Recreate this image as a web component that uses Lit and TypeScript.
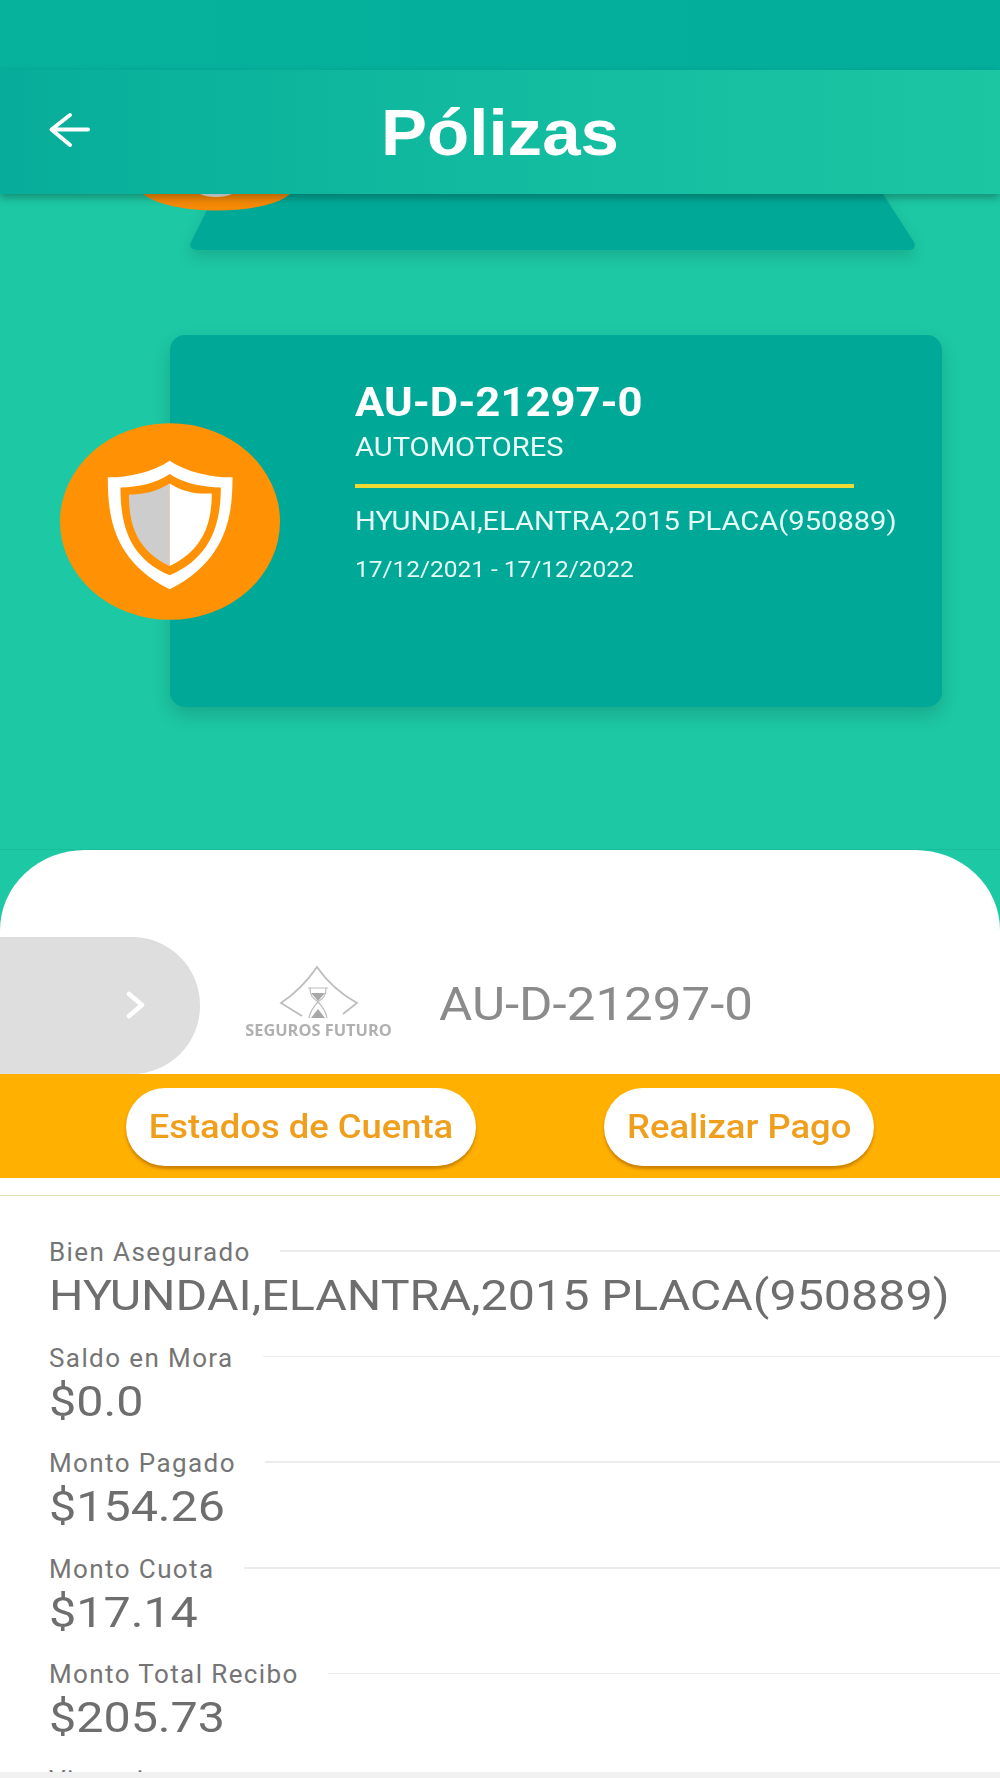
import { LitElement, html, css } from "lit";
import { customElement } from "lit/decorators.js";

const fields = [
  ["Bien Asegurado", "HYUNDAI,ELANTRA,2015 PLACA(950889)"],
  ["Saldo en Mora", "$0.0"],
  ["Monto Pagado", "$154.26"],
  ["Monto Cuota", "$17.14"],
  ["Monto Total Recibo", "$205.73"],
  ["Vigencia", ""],
];

@customElement("app-root")
export class AppRoot extends LitElement {
  static styles = css`
    :host { display: block; width: 1000px; height: 1778px; overflow: hidden; position: relative; background: #fff; font-family: Roboto, "Liberation Sans", sans-serif; }
    .status { height: 70px; background: linear-gradient(90deg, #06b29c, #03ae9a); }
    .header { position: relative; z-index: 3; height: 124px; display: flex; align-items: center; background: linear-gradient(90deg, #07ad9a 0%, #12bb9f 50%, #1cc6a3 100%); box-shadow: 0 4px 8px rgba(0,0,0,.28); }
    .back { position: absolute; left: 48px; top: 42px; width: 42px; height: 36px; }
    .header h1 { margin: 0; width: 100%; text-align: center; font: 700 64.5px/1 "Liberation Sans", Arial, sans-serif; color: #fff; transform: scaleX(1.07); margin-top: 3px; }
    .hero { position: relative; height: 746px; background: #1dc8a4; }
    .seam { position: absolute; left: 0; right: 0; top: 655px; height: 1px; background: #19bd9b; }
    .peek { position: absolute; left: 190px; top: 0; width: 725px; height: 56px; }
    .peek-shadow { filter: drop-shadow(0 7px 7px rgba(0,0,0,.13)); }
    .orange-peek { position: absolute; left: 130px; top: 0; width: 175px; height: 18px; }
    .card { position: absolute; left: 170px; top: 141px; width: 772px; height: 372px; box-sizing: border-box; border-radius: 15px; background: #00a997; box-shadow: 0 8px 18px rgba(0,0,0,.16); color: #fff; padding: 44px 0 0 185px; }
    .sx { display: block; transform-origin: left center; white-space: nowrap; }
    .policy { font-weight: 700; font-size: 40px; line-height: 48px; transform: scaleX(1.09); }
    .type { font-size: 26px; line-height: 30px; margin-top: 5px; color: #ecfbf8; transform: scaleX(1.12); }
    .rule { width: 499px; height: 4px; background: #f0d835; margin-top: 22px; }
    .asset { font-size: 26px; line-height: 32px; margin-top: 17px; color: #e6faf6; transform: scaleX(1.12); }
    .dates { font-size: 22px; line-height: 28px; margin-top: 19px; color: #e6faf6; transform: scaleX(1.11); }
    .seal { position: absolute; left: 60px; top: 229px; width: 220px; height: 197px; }
    .sheet { position: relative; z-index: 2; margin-top: -90px; background: #fff; border-radius: 85px 85px 0 0 / 80px 80px 0 0; box-sizing: border-box; padding-top: 87px; }
    .id-row { display: flex; align-items: center; height: 137px; }
    .pill { width: 200px; height: 137px; box-sizing: border-box; background: #dedede; border-radius: 0 68px 68px 0; display: flex; align-items: center; justify-content: flex-end; padding-right: 53px; padding-bottom: 2px; }
    .pill svg { width: 22px; height: 30px; }
    .logo { width: 148px; margin-left: 44px; display: flex; flex-direction: column; align-items: center; margin-top: -8px; }
    .logo svg { width: 84px; height: 56px; }
    .logo span { font: 700 15.3px/16px "Open Sans", sans-serif; color: #b0b0b0; white-space: nowrap; margin-top: 1px; transform: scaleX(1.07); }
    .id { margin-left: 47px; font-size: 46px; color: #8b8b8b; transform: scaleX(1.11); margin-top: -4px; }
    .band { height: 104px; background: #ffb000; position: relative; }
    .btn { position: absolute; top: 14px; height: 78px; box-sizing: border-box; border-radius: 39px; background: #fff; color: #ef9f1c; font-size: 32.5px; font-weight: 500; display: flex; align-items: center; justify-content: center; box-shadow: 0 3px 3px rgba(170,100,0,.6); white-space: nowrap; }
    .btn span { display: block; transform: scaleX(1.12); }
    .b1 { left: 126px; width: 350px; }
    .b2 { left: 604px; width: 270px; }
    .divider { height: 1px; background: #e9dfae; margin-top: 17px; }
    .fields { padding: 41px 0 0 49px; display: flex; flex-direction: column; }
    .field { height: 105.6px; }
    .label { display: flex; align-items: center; gap: 29px; height: 30px; font-size: 26px; color: #757575; letter-spacing: 1.4px; white-space: nowrap; }
    .label i { flex: 1; height: 1.5px; background: #ececec; margin-top: -2px; }
    .value { font-size: 43px; line-height: 50px; color: #6e6e6e; margin-top: 3px; transform: scaleX(1.126); }
    .nav { position: absolute; left: 0; right: 0; bottom: 0; height: 6px; background: #f1f1f1; z-index: 4; }
  `;

  render() {
    return html`
      <div class="status"></div>
      <div class="header">
        <svg class="back" viewBox="0 0 42 36" fill="none" stroke="#fff" stroke-width="4" stroke-linecap="round" stroke-linejoin="round"><path d="M22 3 L3.5 17.5 L22 33 M4 17.5 H40"/></svg>
        <h1>Pólizas</h1>
      </div>
      <div class="hero">
        <div class="seam"></div>
        <svg class="peek peek-shadow" viewBox="0 0 725 56"><path d="M25 0 H693 L724 48 Q727 56 718 56 H8 Q-2 56 1 48 Z" fill="#00a997"/></svg>
        <svg class="orange-peek" viewBox="0 0 175 18"><path d="M13 0 C40 22 135 22 160 0 Z" fill="#f58a06"/><path d="M70 0 C78 4 94 4 102 0 Z" fill="#e8e8e8"/></svg>
        <div class="card">
          <div class="sx policy">AU-D-21297-0</div>
          <div class="sx type">AUTOMOTORES</div>
          <div class="rule"></div>
          <div class="sx asset">HYUNDAI,ELANTRA,2015 PLACA(950889)</div>
          <div class="sx dates">17/12/2021 - 17/12/2022</div>
        </div>
        <svg class="seal" viewBox="62 70 658 588">
          <ellipse cx="391" cy="364" rx="329" ry="294" fill="#ff9104"/>
          <path d="M390 182C440 215 510 232 578 232C578 350 560 480 390 567C220 480 205 350 205 232C270 232 340 215 390 182Z" fill="#fff"/>
          <path d="M390 222C430 250 490 262 543 262C543 360 520 470 390 525C260 470 243 360 243 262C295 262 350 250 390 222Z" fill="#ff9104"/>
          <path d="M390 250C350 275 310 283 268 283C268 370 290 450 390 497Z" fill="#cdcdcd"/>
          <path d="M390 250C430 275 470 283 516 280C516 370 490 450 390 497Z" fill="#fff"/>
        </svg>
      </div>
      <div class="sheet">
        <div class="id-row">
          <div class="pill"><svg viewBox="0 0 22 30" fill="none" stroke="#fff" stroke-width="4.5" stroke-linecap="round" stroke-linejoin="round"><path d="M4 4 L17 15 L4 26"/></svg></div>
          <div class="logo">
            <svg viewBox="0 0 84 56" fill="none" stroke="#bdbdbd" stroke-width="1.8">
              <path d="M26 51 L5 38 Q26 24 41 2 Q56 24 81 38 L67 49"/>
              <path d="M32 23 H52 M34 23 C34 34 40 34 42 37 C44 34 50 34 50 23 M42 37 C38 41 34 47 33 53 M42 37 C46 41 50 47 51 53" stroke-width="1.2"/>
              <path d="M35 28 H49 L42 36 Z M42 44 L49 53 H35 Z" fill="#a8a8a8" stroke="none"/>
            </svg>
            <span>SEGUROS FUTURO</span>
          </div>
          <div class="sx id">AU-D-21297-0</div>
        </div>
        <div class="band">
          <div class="btn b1"><span>Estados de Cuenta</span></div>
          <div class="btn b2"><span>Realizar Pago</span></div>
        </div>
      </div>
      <div class="divider"></div>
      <div class="fields">
        ${fields.map(([l, v]) => html`<div class="field">
          <div class="label">${l}<i></i></div>
          ${v ? html`<div class="sx value">${v}</div>` : ""}
        </div>`)}
      </div>
      <div class="nav"></div>
    `;
  }
}
